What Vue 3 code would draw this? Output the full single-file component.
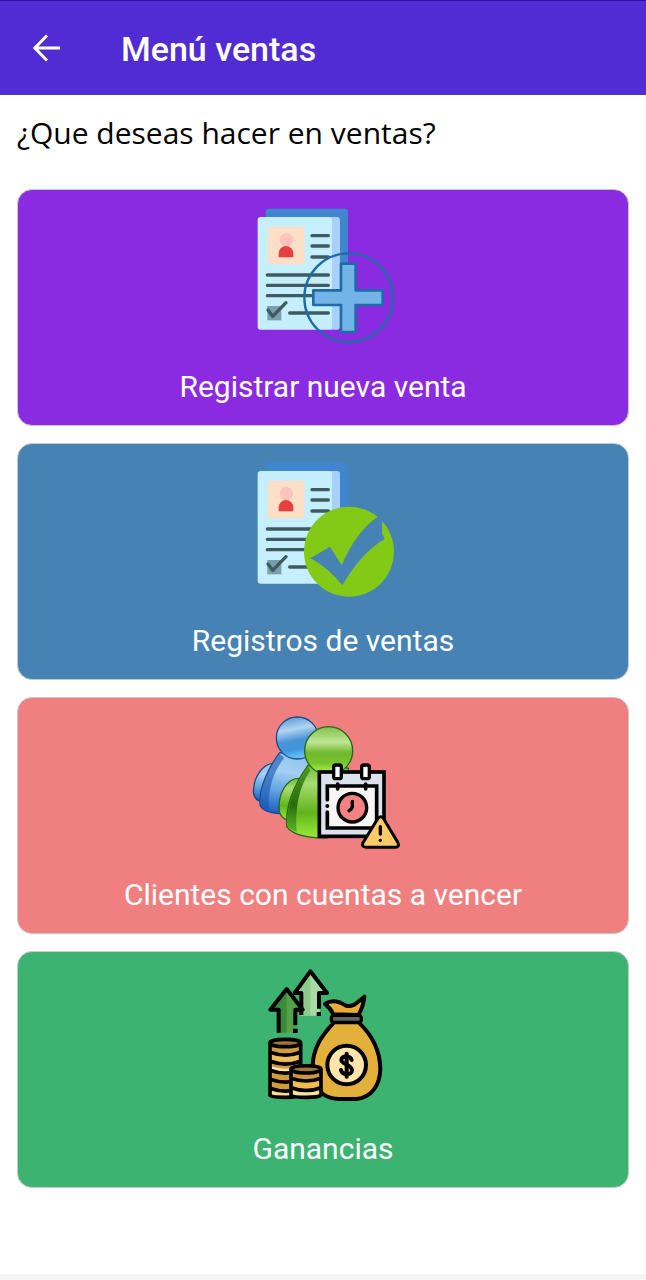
<template>
  <div class="page">
    <header class="top-bar">
      <button class="back-button" type="button" aria-label="Volver">
        <svg viewBox="0 0 28 28" aria-hidden="true">
          <path d="M27 14H2M14 1.5L1.8 14L14 26.5" />
        </svg>
      </button>
      <h1 class="title">Menú ventas</h1>
    </header>

    <main class="content">
      <p class="question">¿Que deseas hacer en ventas?</p>

      <nav class="menu">
        <button
          class="menu-card"
          :class="item.color"
          type="button"
          v-for="item in menuItems"
          :key="item.icon"
        >
          <svg
            v-if="item.icon === 'add' || item.icon === 'check'"
            class="menu-icon"
            viewBox="-6 0 510 480"
            aria-hidden="true"
          >
            <rect x="77" y="41" width="247" height="340" rx="9" fill="#4086cf" />
            <path d="M270 66H291Q300 66 300 75V395Q300 404 291 404H270Z" fill="#a9cffa" />
            <rect x="53" y="66" width="223" height="338" rx="9" fill="#c6effd" />
            <rect x="83" y="95" width="110" height="113" fill="#fddfc8" />
            <circle cx="139" cy="134" r="20" fill="#fcc3bd" />
            <path d="M116 187V176A22 23 0 0 1 160 176V187Z" fill="#e83f40" />
            <path
              d="M216 122H265M216 153H265M216 186H265M82 240H265M82 271H265M82 302H265M149 354H265"
              class="doc-line"
            />
            <rect x="82" y="333" width="42" height="43" fill="#7c9dab" />
            <path d="M84 345L98 364L138 323" fill="none" stroke="#3d5b61" stroke-width="10" stroke-linecap="round" stroke-linejoin="round" />

            <g v-if="item.icon === 'add'">
              <circle cx="326" cy="308" r="133" fill="none" stroke="#1f6ba7" stroke-width="7" />
              <path
                d="M303 206H347V286H428V330H347V411H303V330H220V286H303Z"
                fill="#72b3e8"
                stroke="#1f6ba7"
                stroke-width="8"
                stroke-linejoin="round"
              />
            </g>
            <g v-else>
              <circle cx="327" cy="308" r="135" fill="#83ca16" />
              <path
                d="M211 328L270 293L305 349C331 286 372 228 418 200L427 214L426 253L434 270C382 300 341 351 307 409C279 374 247 347 211 328Z"
                fill="#4682b4"
              />
            </g>
          </svg>

          <svg
            v-else-if="item.icon === 'clients'"
            class="menu-icon"
            viewBox="-6 -6 510 480"
            aria-hidden="true"
          >
            <defs>
              <linearGradient id="blue-body" x1="0.5" y1="0" x2="0.35" y2="1">
                <stop offset="0" stop-color="#8fc4ee" />
                <stop offset="0.3" stop-color="#a5d0f2" />
                <stop offset="0.65" stop-color="#5e9fe0" />
                <stop offset="1" stop-color="#1c5cc4" />
              </linearGradient>
              <linearGradient id="blue-head" x1="0.4" y1="0" x2="0.6" y2="1">
                <stop offset="0" stop-color="#5e9fd8" />
                <stop offset="0.28" stop-color="#b0d4f0" />
                <stop offset="0.55" stop-color="#4a93d8" />
                <stop offset="0.75" stop-color="#4095de" />
                <stop offset="1" stop-color="#78cdf8" />
              </linearGradient>
              <linearGradient id="green-body" x1="0.5" y1="0" x2="0.5" y2="1">
                <stop offset="0" stop-color="#74bd38" />
                <stop offset="0.25" stop-color="#a6dc70" />
                <stop offset="0.65" stop-color="#60b51c" />
                <stop offset="1" stop-color="#9bea3c" />
              </linearGradient>
              <linearGradient id="green-head" x1="0.5" y1="0" x2="0.5" y2="1">
                <stop offset="0" stop-color="#82bf4c" />
                <stop offset="0.32" stop-color="#c0e596" />
                <stop offset="0.55" stop-color="#6fb82e" />
                <stop offset="0.75" stop-color="#76c52b" />
                <stop offset="1" stop-color="#bdf35a" />
              </linearGradient>
              <linearGradient id="green-side" x1="0.5" y1="0" x2="0.4" y2="1">
                <stop offset="0" stop-color="#4e9722" />
                <stop offset="0.6" stop-color="#276d0c" />
                <stop offset="1" stop-color="#5cb020" />
              </linearGradient>
            </defs>

            <path d="M101 175C66 175 36 225 41 267C45 284 60 291 75 291L130 240Z" fill="url(#blue-body)" stroke="#174b91" stroke-width="4" />
            <path d="M119 143C84 190 56 250 60 300C68 320 100 327 140 326L205 280L210 150L178 145Z" fill="url(#blue-body)" stroke="#174b91" stroke-width="4" />
            <path d="M119 146C84 192 59 250 62 299C68 308 78 314 88 317C82 262 96 204 133 158Z" fill="#1755b0" opacity="0.6" />
            <circle cx="172" cy="99" r="63" fill="url(#blue-head)" stroke="#174b91" stroke-width="4" />

            <path d="M179 220C139 218 112 270 118 320C123 337 137 346 152 345L200 270Z" fill="url(#green-body)" stroke="#246815" stroke-width="4" />
            <path d="M204 181C166 234 136 301 140 364C157 390 205 399 260 399L325 350V190L300 183Z" fill="url(#green-body)" stroke="#246815" stroke-width="4" />
            <path d="M204 184C166 236 139 301 142 362C149 371 159 377 170 381C164 312 177 245 211 197Z" fill="url(#green-side)" />
            <circle cx="266" cy="137" r="72" fill="url(#green-head)" stroke="#246815" stroke-width="4" />

            <rect x="238" y="201" width="194" height="193" fill="#dbe1ed" stroke="#000" stroke-width="11" />
            <rect x="262" y="243" width="148" height="126" fill="#f8f6f4" />
            <path d="M262 284V243H410V369H262V321" fill="none" stroke="#000" stroke-width="11" stroke-linecap="round" />
            <circle cx="262" cy="303" r="6" />
            <path d="M293 237V252M377 237V252" stroke="#000" stroke-width="11" stroke-linecap="round" />
            <rect x="281" y="180" width="23" height="41" rx="6" fill="#fff" stroke="#000" stroke-width="10" />
            <rect x="365" y="180" width="23" height="41" rx="6" fill="#fff" stroke="#000" stroke-width="10" />
            <circle cx="337" cy="308" r="43" fill="#f48282" stroke="#000" stroke-width="10" />
            <path d="M337 289V306Q335 313 327 317" fill="none" stroke="#000" stroke-width="10" stroke-linecap="round" />
            <path d="M413 341Q422 329 431 341L474 413Q479 426 466 427H379Q363 426 369 413Z" fill="#fecb66" stroke="#000" stroke-width="9" stroke-linejoin="round" />
            <path d="M421 365V387" stroke="#000" stroke-width="10" stroke-linecap="round" />
            <circle cx="421" cy="406" r="5" />
          </svg>

          <svg
            v-else
            class="menu-icon"
            viewBox="-6 -9 510 480"
            aria-hidden="true"
          >
            <path d="M211 35L263 99H239V167H182V99H164Z" fill="#a8dba4" />
            <path d="M211 38V167H182V99H164Z" fill="#8ccb8c" />
            <path d="M184 165V99H164L211 34L261 99H237V146" class="outline" />
            <rect x="230" y="156" width="13" height="12" />
            <path d="M140 87L188 149H166V218H117V149H91Z" fill="#55a147" />
            <path d="M140 87V218H117V149H91Z" fill="#3b8a3b" />
            <path d="M116 218V149H91L140 87L188 149H166V196" class="outline" />
            <rect x="159" y="206" width="14" height="13" />

            <path d="M282 187C241 231 219 267 218 318C218 375 240 417 298 417H349C395 412 420 375 421 326C420 267 393 222 356 187Z" fill="#e3b13b" class="outline" />
            <path d="M280 163C272 145 264 139 255 132C278 116 300 126 316 136C337 145 353 127 373 110C370 139 362 154 355 165Z" fill="#e9ad36" class="outline" />
            <rect x="274" y="166" width="90" height="21" rx="8" fill="#63656b" stroke="#000" stroke-width="10" />
            <circle cx="320" cy="315" r="58" fill="#ffe5ac" class="outline" />
            <path d="M320 281V350" stroke="#000" stroke-width="12" stroke-linecap="round" />
            <path d="M335 300C331 287 305 285 304 300C303 313 336 313 336 331C335 347 306 345 303 330" fill="none" stroke="#000" stroke-width="12" stroke-linecap="round" />

            <path d="M90 247V405Q91 412 137 412Q181 412 182 405V247Z" fill="#d29b3c" />
            <path d="M90 276Q137 291 182 276V297Q137 312 90 297Z" fill="#f1bd55" />
            <path d="M90 318Q137 334 182 318V336Q137 349 90 336Z" fill="#ffe4ae" />
            <path d="M90 390Q137 407 182 390V407Q137 418 90 407Z" fill="#ffdc94" />
            <ellipse cx="136" cy="248" rx="46" ry="12" fill="#9e7634" />
            <path d="M90 248V406Q94 412 137 412Q178 412 182 406V248C182 235 90 235 90 248C90 264 182 264 182 248M90 277Q137 294 182 277M90 304Q137 321 182 304M90 331Q137 348 182 331M90 358Q137 375 182 358M90 385Q137 402 182 385" class="outline coin-line" />

            <path d="M153 326V404Q154 412 199 412Q242 412 243 404V326Z" fill="#c99743" />
            <path d="M153 355Q199 371 243 355V377Q199 393 153 377Z" fill="#efbb52" />
            <path d="M153 386Q199 402 243 386V408Q199 416 153 408Z" fill="#ffe0a0" />
            <ellipse cx="198" cy="327" rx="45" ry="12" fill="#9e7634" />
            <path d="M153 327V405Q158 412 199 412Q239 412 243 405V327C243 314 153 314 153 327C153 343 243 343 243 327M153 355Q199 371 243 355M153 383Q199 400 243 383" class="outline coin-line" />
          </svg>

          <span class="menu-label">{{ item.label }}</span>
        </button>
      </nav>
    </main>

    <div class="bottom-strip"></div>
  </div>
</template>

<script setup>
const menuItems = [
  { icon: 'add', label: 'Registrar nueva venta', color: 'violet' },
  { icon: 'check', label: 'Registros de ventas', color: 'blue' },
  { icon: 'clients', label: 'Clientes con cuentas a vencer', color: 'coral' },
  { icon: 'profit', label: 'Ganancias', color: 'green' }
];
</script>

<style>
body {
  margin: 0;
  background-color: #fff;
}
</style>

<style scoped>
.page {
  display: flex;
  flex-direction: column;
  min-height: 100vh;
  font-family: Roboto, sans-serif;
}
.top-bar {
  display: flex;
  align-items: center;
  gap: 48px;
  height: 95px;
  padding: 2px 20px 0;
  box-sizing: border-box;
  border-top: 1px solid #2d0c9f;
  background-color: #512bd4;
  color: #fff;
}
.back-button {
  display: flex;
  align-items: center;
  justify-content: center;
  width: 53px;
  height: 56px;
  padding: 0 0 2px;
  border: none;
  background: none;
}
.back-button svg {
  width: 28px;
  height: 28px;
  fill: none;
  stroke: #fff;
  stroke-width: 3;
}
.title {
  margin: 0;
  font-size: 34px;
  font-weight: 500;
  line-height: 40px;
}
.content {
  flex: 1;
  padding: 18px 17px;
}
.question {
  margin: 0 0 36px;
  font-family: 'Open Sans', sans-serif;
  font-size: 30px;
  line-height: 40px;
  color: #000;
}
.menu {
  display: flex;
  flex-direction: column;
  gap: 17px;
}
.menu-card {
  display: flex;
  flex-direction: column;
  align-items: center;
  width: 100%;
  height: 237px;
  padding: 5px 16px;
  border: 1px solid #c8c8c8;
  border-radius: 15px;
  color: #fff;
  font-family: inherit;
}
.menu-card.violet {
  background-color: #8a2be2;
}
.menu-card.blue {
  background-color: #4682b4;
}
.menu-card.coral {
  background-color: #f08080;
}
.menu-card.green {
  background-color: #3cb371;
}
.menu-icon {
  flex: none;
  width: 170px;
  height: 160px;
}
.menu-label {
  margin-top: 12px;
  font-size: 30px;
  line-height: 40px;
}
.doc-line {
  fill: none;
  stroke: #3d5b61;
  stroke-width: 10;
  stroke-linecap: round;
}
.outline {
  stroke: #000;
  stroke-width: 12;
  stroke-linejoin: round;
}
.outline:not([fill]) {
  fill: none;
}
.coin-line {
  stroke-width: 11;
}
.bottom-strip {
  height: 6px;
  background-color: #f5f5f5;
}
</style>
